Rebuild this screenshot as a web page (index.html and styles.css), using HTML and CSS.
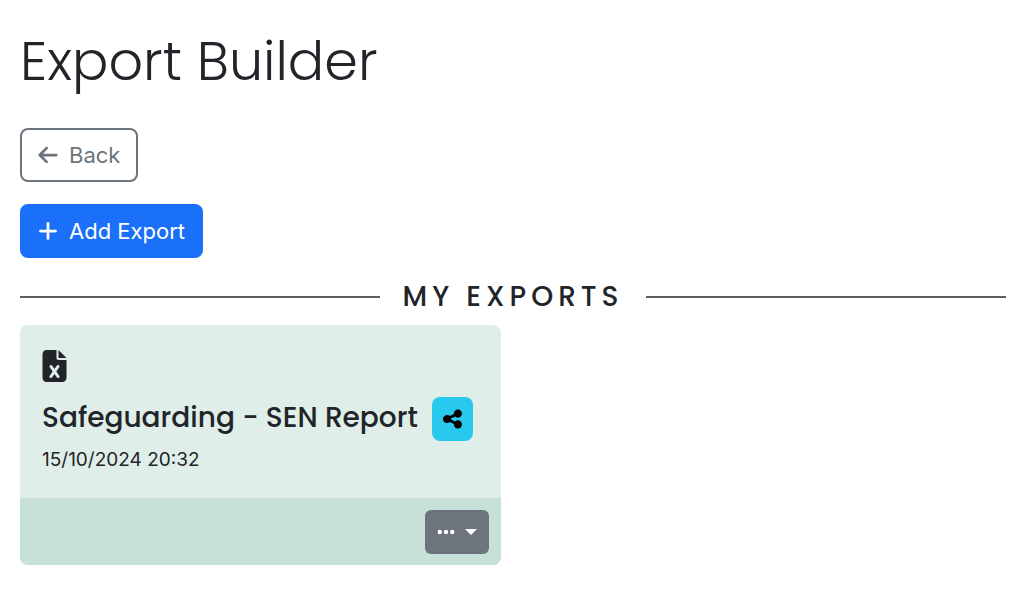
FILE: index.html
```html
<!DOCTYPE html>
<html lang="en">
<head>
    <meta charset="utf-8">
    <meta name="viewport" content="width=device-width, initial-scale=1">
    <title>Export Builder</title>
    <link rel="stylesheet" href="styles.css">
</head>
<body>
    <main class="page">
        <h1>Export Builder</h1>

        <div class="actions">
            <button type="button" class="btn btn-outline">
                <svg class="icon" viewBox="0 0 448 512" aria-hidden="true"><path d="M9.400 233.400c-12.500 12.500-12.500 32.800 0 45.300l160 160c12.500 12.500 32.800 12.500 45.300 0s12.500-32.800 0-45.300L109.200 288 416 288c17.700 0 32-14.300 32-32s-14.300-32-32-32l-306.700 0L214.600 118.600c12.500-12.500 12.500-32.800 0-45.300s-32.800-12.500-45.300 0l-160 160z"/></svg>
                Back
            </button>
            <button type="button" class="btn btn-primary">
                <svg class="icon" viewBox="0 0 448 512" aria-hidden="true"><path d="M256 80c0-17.700-14.300-32-32-32s-32 14.300-32 32l0 144L48 224c-17.700 0-32 14.300-32 32s14.300 32 32 32l144 0 0 144c0 17.700 14.300 32 32 32s32-14.300 32-32l0-144 144 0c17.700 0 32-14.300 32-32s-14.300-32-32-32l-144 0 0-144z"/></svg>
                Add Export
            </button>
        </div>

        <h2 class="divider">My Exports</h2>

        <div class="exports">
            <article class="card">
                <div class="card-body">
                    <svg class="file-icon" viewBox="0 0 384 512" aria-hidden="true"><path d="M64 0C28.700 0 0 28.700 0 64L0 448c0 35.300 28.700 64 64 64l256 0c35.300 0 64-28.700 64-64l0-288-128 0c-17.700 0-32-14.300-32-32L224 0 64 0zM256 0l0 128 128 0L256 0zM155.700 250.200L192 302.100l36.300-51.900c7.600-10.900 22.600-13.500 33.400-5.900s13.500 22.600 5.900 33.400L221.300 344l46.400 66.200c7.600 10.900 5 25.800-5.900 33.400s-25.800 5-33.400-5.900L192 385.800l-36.300 51.900c-7.600 10.900-22.600 13.500-33.400 5.900s-13.500-22.600-5.900-33.400L162.700 344l-46.400-66.200c-7.600-10.900-5-25.800 5.900-33.400s25.800-5 33.400 5.900z"/></svg>
                    <div class="card-title">
                        <h3>Safeguarding - SEN Report</h3>
                        <button type="button" class="btn-share" aria-label="Share">
                            <svg viewBox="0 0 448 512" aria-hidden="true"><path d="M352 224c53 0 96-43 96-96s-43-96-96-96s-96 43-96 96c0 4 .2 8 .7 11.900l-94.100 47C145.400 170.200 121.900 160 96 160c-53 0-96 43-96 96s43 96 96 96c25.900 0 49.400-10.200 66.600-26.900l94.100 47c-.5 3.900-.7 7.800-.7 11.900c0 53 43 96 96 96s96-43 96-96s-43-96-96-96c-25.900 0-49.400 10.200-66.600 26.900l-94.100-47c.5-3.900 .7-7.800 .7-11.900s-.2-8-.7-11.900l94.100-47C302.600 213.800 326.100 224 352 224z"/></svg>
                        </button>
                    </div>
                    <time datetime="2024-10-15T20:32">15/10/2024 20:32</time>
                </div>
                <div class="card-footer">
                    <button type="button" class="btn-menu" aria-label="Options" aria-haspopup="true">
                        <svg class="dots" viewBox="0 0 448 512" aria-hidden="true"><path d="M8 256a56 56 0 1 1 112 0A56 56 0 1 1 8 256zm160 0a56 56 0 1 1 112 0 56 56 0 1 1 -112 0zm216-56a56 56 0 1 1 0 112 56 56 0 1 1 0-112z"/></svg>
                        <span class="caret"></span>
                    </button>
                </div>
            </article>
        </div>
    </main>
</body>
</html>
```
FILE: styles.css
```css
* {
    box-sizing: border-box;
}

body {
    margin: 0;
    background-color: #fff;
    color: #212529;
    font-family: Inter, sans-serif;
    font-size: 22px;
    line-height: 34px;
}

h1, h2, h3 {
    margin: 0;
    font-family: Poppins, Inter, sans-serif;
}

button {
    font-family: inherit;
    cursor: pointer;
}

svg {
    fill: currentColor;
}

.page {
    padding: 28px 18px 28px 20px;
}

h1 {
    font-size: 54px;
    font-weight: 300;
    line-height: 66px;
}

.actions {
    display: flex;
    flex-direction: column;
    align-items: flex-start;
    gap: 22px;
    margin-top: 34px;
}

.btn {
    display: flex;
    align-items: center;
    gap: 11px;
    padding: 8px 16px;
    border: 2px solid;
    border-radius: 8px;
    font-size: 22px;
    line-height: 34px;
}

.btn-outline {
    border-color: #6c757d;
    background-color: #fff;
    color: #6c757d;
}

.btn-primary {
    border-color: #1b70fa;
    background-color: #1b70fa;
    color: #fff;
}

.icon {
    width: 20px;
    height: 22px;
}

.divider {
    display: flex;
    align-items: center;
    gap: 22px;
    margin: 22px 0 11px;
    font-size: 28px;
    font-weight: 500;
    line-height: 34px;
    letter-spacing: 5px;
    text-transform: uppercase;
}

.divider::before,
.divider::after {
    content: "";
    flex: 1;
    height: 2px;
    background-color: #5b5f64;
}

.exports {
    display: grid;
    grid-template-columns: 1fr 1fr;
    gap: 24px;
}

.card {
    border-radius: 8px;
    background-color: #e0eee9;
    overflow: hidden;
}

.card-body {
    padding: 25px 22px 21px;
}

.file-icon {
    display: block;
    width: 25px;
    height: 32px;
}

.card-title {
    display: flex;
    align-items: center;
    gap: 14px;
    margin: 15px 0 2px;
}

h3 {
    padding-bottom: 2px;
    font-size: 28px;
    font-weight: 500;
    line-height: 34px;
    white-space: nowrap;
}

.btn-share {
    display: flex;
    align-items: center;
    justify-content: center;
    width: 41px;
    height: 44px;
    padding: 0;
    border: none;
    border-radius: 8px;
    background-color: #29c9ef;
    color: #000;
}

.btn-share svg {
    width: 19px;
    height: 22px;
}

time {
    display: block;
    font-size: 19px;
    line-height: 34px;
}

.card-footer {
    display: flex;
    justify-content: flex-end;
    padding: 12px 12px 11px;
    background-color: #c8e1d8;
}

.btn-menu {
    display: flex;
    align-items: center;
    gap: 10px;
    height: 44px;
    padding: 0 12px;
    border: none;
    border-radius: 6px;
    background-color: #6d747e;
    color: #fff;
}

.dots {
    width: 18px;
    height: 20px;
}

.caret {
    border-top: 6px solid;
    border-right: 6px solid transparent;
    border-left: 6px solid transparent;
}
```
